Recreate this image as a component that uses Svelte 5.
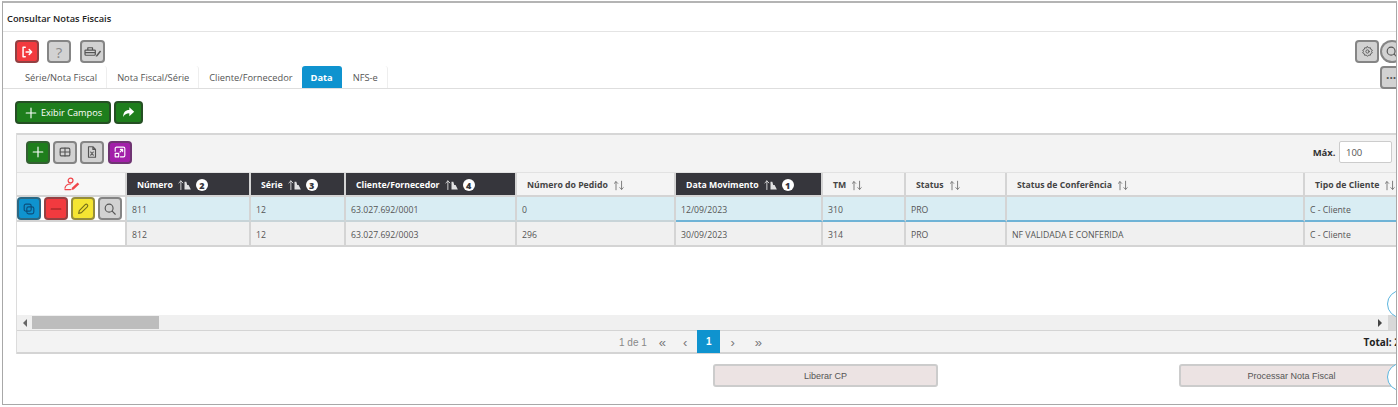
<script>
	const columns = [
		{ label: 'Número', width: 124, order: 2 },
		{ label: 'Série', width: 95, order: 3 },
		{ label: 'Cliente/Fornecedor', width: 171, order: 4 },
		{ label: 'Número do Pedido', width: 159 },
		{ label: 'Data Movimento', width: 147, order: 1 },
		{ label: 'TM', width: 83 },
		{ label: 'Status', width: 101 },
		{ label: 'Status de Conferência', width: 298 },
		{ label: 'Tipo de Cliente', width: 110 }
	];

	const rows = [
		['811', '12', '63.027.692/0001', '0', '12/09/2023', '310', 'PRO', '', 'C - Cliente'],
		['812', '12', '63.027.692/0003', '296', '30/09/2023', '314', 'PRO', 'NF VALIDADA E CONFERIDA', 'C - Cliente']
	];

	const tabs = ['Série/Nota Fiscal', 'Nota Fiscal/Série', 'Cliente/Fornecedor', 'Data', 'NFS-e'];
</script>

<div class="frame">
	<h1 class="title">Consultar Notas Fiscais</h1>

	<div class="toolbar">
		<button class="icon red" aria-label="Sair">
			<svg viewBox="0 0 16 16" class="bold"><path d="M6 2.5H3.5v11H6M7 8h6M10.5 5.2 13.3 8l-2.800 2.800" /></svg>
		</button>
		<button class="icon grey help">?</button>
		<button class="icon grey printer" aria-label="Imprimir">
			<svg viewBox="0 0 20 16" class="dark"><path d="M5 6.500V4h5v2.500M2 7c0-.5.500-.5 1-.5h9c.5 0 1 0 1 .5v4c0 .5-.500 1-1 1H3c-.5 0-1-.5-1-1zM2 9.200h11" /><path class="solid" d="m14 12 4-5 1.200 1-4 5-1.800.6z" /></svg>
		</button>
		<div class="spacer"></div>
		<button class="icon grey" aria-label="Configurar">
			<svg viewBox="0 0 16 16" class="dark gear"><circle cx="8" cy="8" r="2" /><path d="M8 2l1.500 1.600 2.100-.2.500 2 1.900 1L13 8l.9 1.600-1.900 1-.5 2-2.100-.2L8 14l-1.500-1.600-2.100.2-.5-2-1.900-1L3 8l-.9-1.600 1.900-1 .5-2 2.100.2z" /></svg>
		</button>
		<button class="icon grey round" aria-label="Buscar">
			<svg viewBox="0 0 16 16" class="dark"><circle cx="7" cy="7" r="4.500" /><path d="m10.500 10.500 3.500 3.500" /></svg>
		</button>
	</div>

	<div class="tabs">
		{#each tabs as tab}
			<span class="tab" class:active={tab === 'Data'}>{tab}</span>
		{/each}
		<button class="icon grey more">···</button>
	</div>

	<div class="actions">
		<button class="green wide">
			<svg viewBox="0 0 16 16"><path d="M8 2.500v11M2.500 8h11" /></svg>
			Exibir Campos
		</button>
		<button class="green narrow" aria-label="Compartilhar">
			<svg viewBox="0 0 16 16"><path class="solid" d="M15 7 9 1.500V5C4 5 1.500 8 1.500 13.500c1.500-3 4-4.500 7.500-4.500v3.500z" /></svg>
		</button>
	</div>

	<section class="panel">
		<div class="panel-top">
			<button class="icon green-square" aria-label="Adicionar">
				<svg viewBox="0 0 16 16"><path d="M8 2.500v11M2.500 8h11" /></svg>
			</button>
			<button class="icon grey" aria-label="Colunas">
				<svg viewBox="0 0 16 16" class="dark"><rect x="2.500" y="3.500" width="11" height="9" rx="1.500" /><path d="M8 3.500v9M2.500 8h11" /></svg>
			</button>
			<button class="icon grey" aria-label="Excel">
				<svg viewBox="0 0 16 16" class="dark"><path d="M4 2h5l3 3v9H4zM9 2v3h3M6.500 8l3 3.500M9.500 8l-3 3.500" /></svg>
			</button>
			<button class="icon purple" aria-label="Expandir">
				<svg viewBox="0 0 16 16"><path d="M2.500 7V4A1.500 1.500 0 0 1 4 2.500h8A1.500 1.500 0 0 1 13.500 4v8a1.500 1.500 0 0 1-1.500 1.500H8.500M8 8l3-3M8.500 5H11v2.500" /><rect x="2.500" y="9.500" width="4" height="4" /></svg>
			</button>
			<div class="spacer"></div>
			<label class="max">Máx. <input value="100" /></label>
		</div>

		<div class="grid">
			<div class="row head">
				<div class="cell tools-head">
					<svg viewBox="0 0 18 15"><circle cx="8" cy="3.800" r="2.600" /><path d="M2 12c.5-3 2.800-4.500 6-4.500M2 13.500h6" /><path class="solid" d="m9.500 11.500 6-5.500 1.800 1.800-6 5.500-2.500.7z" /></svg>
				</div>
				{#each columns as col}
					<div class="cell th" class:sorted={col.order} style="width: {col.width}px">
						<span>{col.label}</span>
						{#if col.order}
							<svg class="sort-on" viewBox="0 0 14 11">
								<path d="M3 10.500V1M.8 3.200 3 1l2.200 2.200" />
								<path class="solid" d="M7 10.500V2h2l1 3.500h1.500l2.500 5z" />
							</svg>
							<b class="badge">{col.order}</b>
						{:else}
							<svg class="sort-off" viewBox="0 0 14 12">
								<path d="M3.500 11V1.500M1.500 3.500l2-2 2 2M10 1v9.500M8 8.500l2 2 2-2" />
							</svg>
						{/if}
					</div>
				{/each}
			</div>

			{#each rows as row, i}
				<div class="row body" class:selected={i === 0}>
					<div class="cell tools">
						{#if i === 0}
							<button class="icon blue" aria-label="Copiar">
								<svg viewBox="0 0 16 16" class="navy"><rect x="2.500" y="2.500" width="8" height="8" rx="2" /><rect x="5.500" y="5.500" width="8" height="8" rx="2" /></svg>
							</button>
							<button class="icon red" aria-label="Remover">
								<svg viewBox="0 0 16 16" class="maroon"><path d="M2.500 8h11" /></svg>
							</button>
							<button class="icon yellow" aria-label="Editar">
								<svg viewBox="0 0 16 16" class="olive"><path d="m3 13 .8-3.200 6.700-6.700a1.500 1.500 0 0 1 2.400 2.400l-6.700 6.700z" /></svg>
							</button>
							<button class="icon grey" aria-label="Ver">
								<svg viewBox="0 0 16 16" class="dark"><circle cx="7" cy="7" r="4.500" /><path d="m10.500 10.500 3.500 3.500" /></svg>
							</button>
						{/if}
					</div>
					{#each row as value, c}
						<div class="cell td" style="width: {columns[c].width}px">{value}</div>
					{/each}
				</div>
			{/each}
		</div>

		<div class="scrollbar">
			<i class="arrow left"></i>
			<div class="thumb"></div>
			<div class="spacer"></div>
			<i class="arrow right"></i>
			<span class="corner"></span>
		</div>

		<div class="pager">
			<span class="count">1 de 1</span>
			<span class="nav first">«</span>
			<span class="nav prev">‹</span>
			<span class="page">1</span>
			<span class="nav next">›</span>
			<span class="nav last">»</span>
			<strong class="total">Total: 2</strong>
		</div>
	</section>

	<div class="footer">
		<button class="plain">Liberar CP</button>
		<button class="plain">Processar Nota Fiscal</button>
	</div>

	<span class="ring upper"></span>
	<span class="ring lower"></span>
</div>

<style>
	:global(body) {
		background: #fff;
		overflow: hidden;
	}

	.frame {
		position: relative;
		box-sizing: border-box;
		width: 1395px;
		height: 404px;
		margin: 1px 0 0 2px;
		border: 1px solid #a8a8a8;
		border-top: 2px solid #b4b4b4;
		overflow: hidden;
		font-family: 'Open Sans', sans-serif;
		font-size: 10px;
		color: #444;
	}

	.title {
		box-sizing: border-box;
		height: 29px;
		margin: 0;
		padding: 0 0 0 4px;
		border-bottom: 1px solid #e4e4e4;
		font-size: 9.3px;
		font-weight: 600;
		line-height: 31px;
		color: #222;
	}

	button {
		box-sizing: border-box;
		padding: 0;
		font-family: inherit;
		display: inline-flex;
		align-items: center;
		justify-content: center;
	}

	svg {
		fill: none;
		stroke: currentColor;
		stroke-width: 1.3;
		stroke-linecap: round;
		stroke-linejoin: round;
	}

	.solid {
		fill: currentColor;
		stroke: none;
	}

	.icon {
		flex: none;
		width: 24px;
		height: 23px;
		border: 2px solid rgba(70, 70, 70, 0.55);
		border-radius: 4px;
		color: #fff;
	}

	.icon svg {
		width: 14px;
		height: 14px;
	}

	.icon svg.bold {
		stroke-width: 1.7;
	}

	.red {
		background: #f23a3f;
	}

	.grey {
		background: #d2d2d2;
		color: #555;
	}

	.blue {
		background: #0f93cf;
	}

	.yellow {
		background: #f5e532;
	}

	.purple {
		background: #a21fa9;
	}

	.green-square {
		background: #1e7e1c;
	}

	.dark {
		color: #555;
	}

	.navy {
		color: #0d4f7c;
	}

	.maroon {
		color: #8c2020;
	}

	.olive {
		color: #77701a;
	}

	.help {
		font-size: 15px;
		font-weight: 400;
		color: #8a8a8a;
	}

	.toolbar {
		display: flex;
		gap: 8px;
		height: 23px;
		padding: 8px 0 0 12px;
	}

	.toolbar .printer {
		width: 25px;
		margin-left: 1px;
	}

	.toolbar .printer svg {
		width: 19px;
		height: 15px;
	}

	.icon svg.gear {
		width: 13px;
		height: 13px;
		stroke-width: 1.1;
	}

	.toolbar .round {
		margin-left: -7px;
		margin-right: -8px;
		border-radius: 50%;
	}

	.spacer {
		flex: 1;
	}

	.tabs {
		position: relative;
		display: flex;
		align-items: stretch;
		box-sizing: border-box;
		height: 23px;
		margin-top: 3px;
		padding-left: 10px;
		border-bottom: 1px solid #dedede;
	}

	.tab {
		display: flex;
		align-items: center;
		padding: 0 9px;
		margin-right: 1px;
		border-right: 1px solid #eee;
		border-radius: 3px 3px 0 0;
		font-size: 9.3px;
		color: #555;
	}

	.tab:first-child {
		padding-left: 12px;
	}

	.tab.active {
		margin-left: -2px;
		margin-right: 2px;
		background: #0f93cf;
		border-right: 0;
		font-weight: 700;
		color: #fff;
	}

	.more {
		position: absolute;
		top: 0;
		left: 1377px;
		justify-content: flex-start;
		padding-left: 4px;
		color: #555;
		font-size: 12px;
		font-weight: 700;
	}

	.actions {
		display: flex;
		gap: 3px;
		padding: 12px 0 0 12px;
	}

	.green {
		height: 23px;
		background: #1e7e1c;
		border: 2px solid rgba(40, 60, 40, 0.7);
		border-radius: 4px;
		color: #fff;
		font-size: 9.2px;
	}

	.wide {
		width: 96px;
		gap: 3px;
	}

	.wide svg {
		width: 14px;
		height: 14px;
	}

	.narrow {
		width: 29px;
	}

	.narrow svg {
		width: 13px;
		height: 13px;
	}

	.panel {
		box-sizing: border-box;
		margin: 9px 0 0 13px;
		border-left: 1px solid #dcdcdc;
		height: 221px;
		display: flex;
		flex-direction: column;
	}

	.panel-top {
		box-sizing: border-box;
		display: flex;
		align-items: center;
		gap: 3px;
		height: 40px;
		padding: 0 4px 3px 9px;
		background: #f3f3f3;
		border-top: 2px solid #d6d6d6;
		border-bottom: 1px solid #e2e2e2;
	}

	.panel-top .purple {
		margin-left: 1px;
	}

	.max {
		font-size: 9.5px;
		font-weight: 700;
		color: #333;
	}

	.max input {
		box-sizing: border-box;
		width: 53px;
		height: 22px;
		margin-left: 1px;
		padding: 0 6px;
		border: 1px solid #ccc;
		border-radius: 2px;
		font: 400 9.5px 'Open Sans', sans-serif;
		color: #555;
	}

	.grid {
		flex: 1;
		overflow: hidden;
	}

	.row {
		display: flex;
		width: max-content;
	}

	.cell {
		box-sizing: border-box;
		flex: none;
		display: flex;
		align-items: center;
		border-right: 2px solid #d4d4d4;
		border-bottom: 2px solid #d4d4d4;
	}

	.head .cell {
		height: 24px;
	}

	.body .cell {
		height: 25px;
	}

	.tools-head,
	.tools {
		width: 110px;
		background: #fff;
	}

	.tools-head {
		justify-content: center;
		background: #f7f7f7;
		color: #f0454a;
	}

	.tools-head svg {
		width: 17px;
		height: 14px;
	}

	.tools {
		gap: 3px;
	}

	.th {
		padding: 2px 0 0 10px;
		gap: 5px;
		background: #f4f4f4;
		font-size: 8.7px;
		font-weight: 700;
		color: #444;
	}

	.th.sorted {
		background: #36363c;
		color: #fff;
	}

	.sort-on {
		width: 13px;
		height: 10px;
		stroke-width: 1;
		opacity: 0.85;
	}

	.sort-off {
		width: 12px;
		height: 11px;
		stroke-width: 1.1;
		color: #777;
	}

	.badge {
		display: flex;
		align-items: center;
		justify-content: center;
		width: 12px;
		height: 12px;
		border-radius: 50%;
		background: #fff;
		font-size: 9px;
		color: #36363c;
	}

	.td {
		padding: 2px 0 0 5px;
		background: #f0f0f0;
		font-size: 8.7px;
		color: #555;
	}

	.selected .td {
		background: #d9edf3;
		border-bottom-color: #c8d4d8;
	}

	.selected .td:nth-child(n + 6) {
		border-bottom-color: #6fb3d6;
	}

	.scrollbar {
		display: flex;
		align-items: center;
		height: 15px;
		background: #f0f0f0;
	}

	.thumb {
		width: 127px;
		height: 13px;
		margin-left: 5px;
		background: #bdbdbd;
	}

	.arrow {
		width: 0;
		height: 0;
		border-top: 4px solid transparent;
		border-bottom: 4px solid transparent;
	}

	.arrow.left {
		margin-left: 6px;
		border-right: 4px solid #666;
	}

	.arrow.right {
		margin-right: 6px;
		border-left: 4px solid #444;
	}

	.corner {
		width: 8px;
		height: 15px;
		background: #d8d8d8;
	}

	.pager {
		box-sizing: border-box;
		display: flex;
		align-items: center;
		height: 24px;
		padding-top: 1px;
		background: #f3f3f3;
		border-top: 1px solid #d4d4d4;
		border-bottom: 2px solid #d4d4d4;
		font-family: 'Liberation Sans', sans-serif;
		color: #888;
	}

	.count {
		margin-left: 602px;
		font-size: 10px;
	}

	.nav {
		font-size: 13px;
		color: #777;
	}

	.first {
		margin-left: 12px;
	}

	.prev {
		margin-left: 17px;
	}

	.page {
		display: flex;
		align-items: center;
		justify-content: center;
		width: 23px;
		height: 23px;
		margin: -2px 0 -1px 10px;
		background: #0f93cf;
		color: #fff;
		font-weight: 700;
	}

	.next {
		margin-left: 10px;
	}

	.last {
		margin-left: 20px;
	}

	.total {
		margin-left: auto;
		margin-right: -4px;
		font-family: 'Open Sans', sans-serif;
		font-size: 10px;
		color: #222;
	}

	.footer {
		display: flex;
		padding: 10px 0 0 710px;
		gap: 241px;
	}

	.plain {
		flex: none;
		box-sizing: border-box;
		width: 225px;
		height: 23px;
		background: #ece3e3;
		border: 2px solid #cccccc;
		border-radius: 3px;
		font-family: 'Liberation Sans', sans-serif;
		font-size: 9px;
		color: #555;
	}

	.ring {
		position: absolute;
		left: 1384px;
		width: 26px;
		height: 26px;
		border: 1px solid #5cb5de;
		border-radius: 50%;
		background: #fff;
	}

	.ring.upper {
		top: 287px;
	}

	.ring.lower {
		top: 360px;
	}
</style>
